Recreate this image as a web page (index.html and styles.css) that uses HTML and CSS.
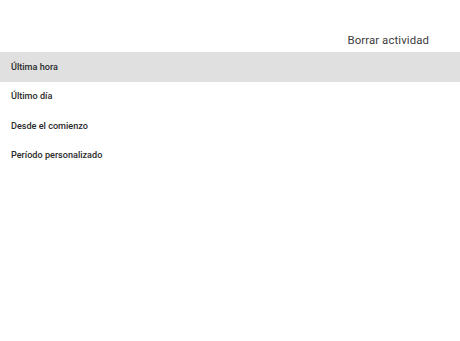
FILE: index.html
```html
<!DOCTYPE html>
<html>

<head>
    <meta charset="UTF-8">
    <title>Borrar actividad</title>
    <link rel="stylesheet" href="styles.css">
</head>

<body>
    <div class="header">
        <span class="title">Borrar actividad</span>
    </div>
    <ul class="options">
        <li class="option selected">Última hora</li>
        <li class="option">Último día</li>
        <li class="option">Desde el comienzo</li>
        <li class="option">Período personalizado</li>
    </ul>
</body>

</html>
```

FILE: styles.css
```css
*{
    font-family: Roboto, "Liberation Sans", sans-serif;
}
body{
    margin: 0;
    background: #ffffff;
}
.header{
    display: flex;
    justify-content: flex-end;
    height: 52px;
    padding-right: 31px;
    box-sizing: border-box;
    padding-top: 32px;
}
.title{
    color: #3c3c3c;
    font-size: 11.4px;
    line-height: 16px;
    letter-spacing: 0.1px;
}
.options{
    list-style: none;
    margin: 0;
    padding: 0;
}
.option{
    display: flex;
    align-items: center;
    height: 29.5px;
    padding-left: 11px;
    color: #2a2a2a;
    font-size: 9.1px;
    font-weight: 500;
}
.selected{
    background: #e0e0e0;
}
```
